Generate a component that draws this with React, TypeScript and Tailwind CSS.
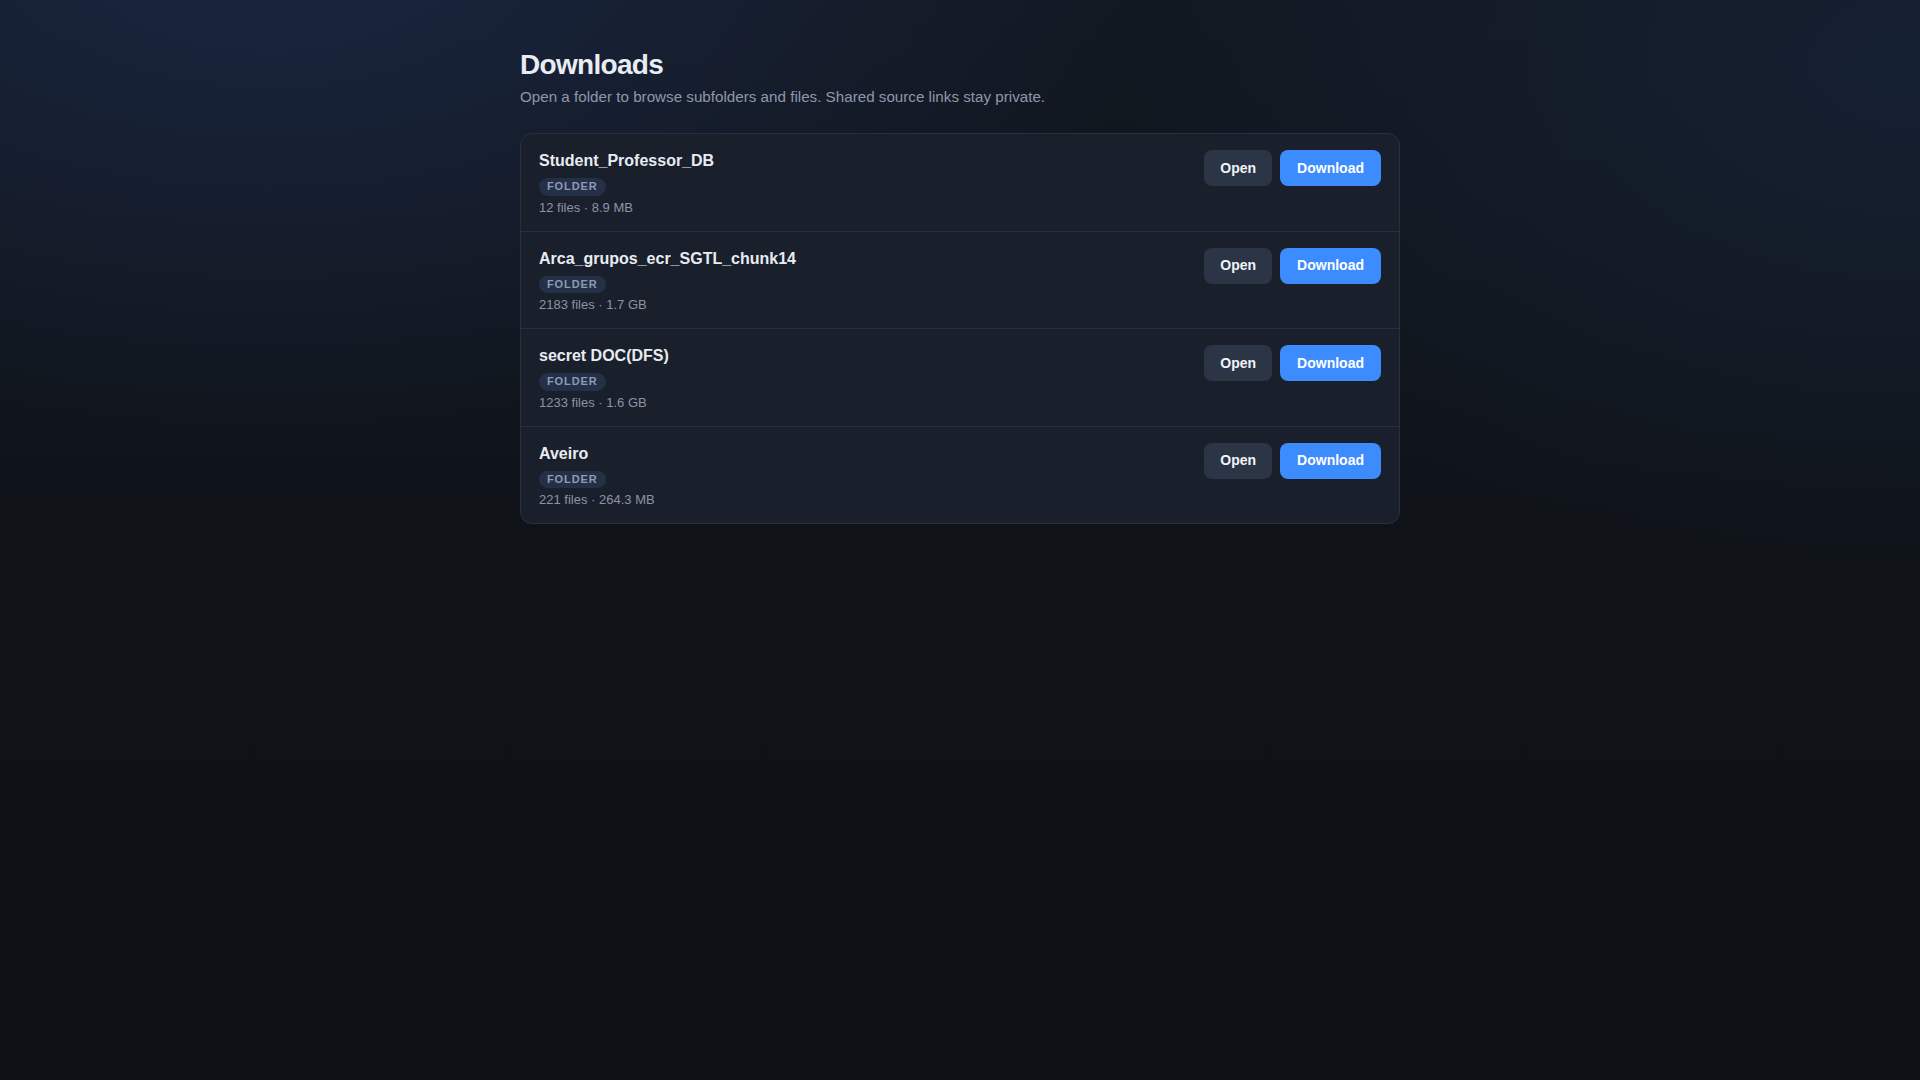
import React from 'react';

type Folder = {
  name: string;
  files: number;
  size: string;
};

const folders: Folder[] = [
  { name: 'Student_Professor_DB', files: 12, size: '8.9 MB' },
  { name: 'Arca_grupos_ecr_SGTL_chunk14', files: 2183, size: '1.7 GB' },
  { name: 'secret DOC(DFS)', files: 1233, size: '1.6 GB' },
  { name: 'Aveiro', files: 221, size: '264.3 MB' },
];

const FolderRow: React.FC<{ folder: Folder; last: boolean }> = ({ folder, last }) => (
  <div className={`flex items-start justify-between px-[18px] pt-4 pb-[14px] ${last ? '' : 'border-b border-[#283040]'}`}>
    <div className="flex flex-col items-start">
      <div className="text-[16px] leading-[22px] font-bold text-[#e8ecf2]">{folder.name}</div>
      <span className="mt-1.5 rounded-full bg-[#243047] px-2 py-0.5 text-[11px] leading-[13.5px] font-bold tracking-[0.08em] text-[#8e9bb2]">
        FOLDER
      </span>
      <div className="mt-[3px] text-[13px] leading-[18px] text-[#8b94a4]">
        {folder.files} files · {folder.size}
      </div>
    </div>
    <div className="flex items-center gap-2">
      <button className="h-9 rounded-lg bg-[#2b3546] px-4 text-[14px] font-bold text-[#f1f4f8]">Open</button>
      <button className="h-9 rounded-lg bg-[#3d8cfd] px-[17px] text-[14px] font-bold text-white">Download</button>
    </div>
  </div>
);

const App: React.FC = () => {
  return (
    <div className="min-h-screen w-full bg-[#0e1216] bg-[radial-gradient(ellipse_900px_520px_at_14%_-6%,#1a2640_0%,rgba(26,38,64,0)_100%),radial-gradient(ellipse_800px_500px_at_100%_6%,#152031_0%,rgba(21,32,49,0)_100%),linear-gradient(180deg,#121821_0%,#0f1318_55%,#0e1216_100%)] font-['Liberation_Sans',Arial,sans-serif]">
      <div className="mx-auto w-[880px] pt-[47px]">
        <h1 className="text-[28px] leading-[35px] font-bold tracking-tight text-[#e8ecf3]">Downloads</h1>
        <p className="mt-1 text-[15.2px] leading-[22px] text-[#8d98aa]">
          Open a folder to browse subfolders and files. Shared source links stay private.
        </p>
        <div className="mt-[25px] overflow-hidden rounded-xl border border-[#283040] bg-[#1a202b]">
          {folders.map((f, i) => (
            <FolderRow key={f.name} folder={f} last={i === folders.length - 1} />
          ))}
        </div>
      </div>
    </div>
  );
};

export default App;
